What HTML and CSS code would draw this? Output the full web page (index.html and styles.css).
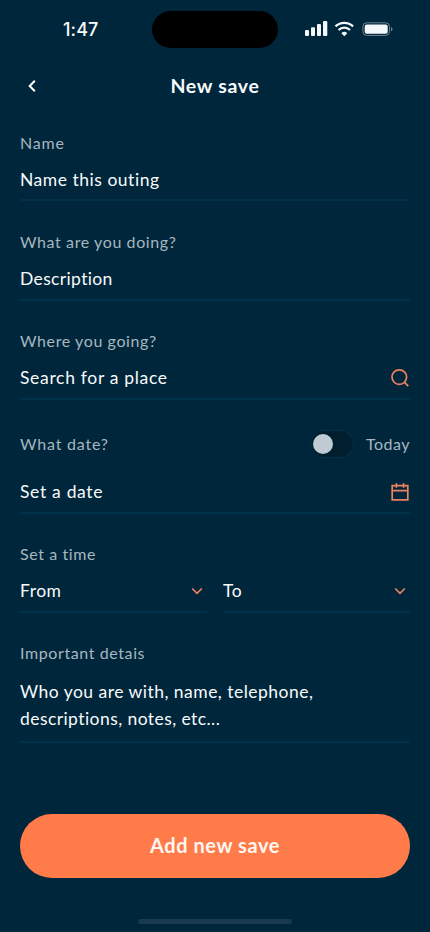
FILE: index.html
```html
<!DOCTYPE html>
<html lang="en">
<head>
<meta charset="utf-8">
<meta name="viewport" content="width=device-width, initial-scale=1">
<title>New save</title>
<link rel="stylesheet" href="styles.css">
</head>
<body>
<div class="screen">
  <div class="status">
    <span class="clock">1:47</span>
    <div class="island"></div>
    <svg class="indicators" width="90" height="18" viewBox="0 0 90 18">
      <g fill="#f4f8fa">
        <rect x="1" y="10" width="4" height="6" rx="1"/>
        <rect x="7" y="7.3" width="4" height="8.700" rx="1"/>
        <rect x="13" y="4" width="4" height="12" rx="1"/>
        <rect x="19" y="1" width="4.300" height="15" rx="1"/>
        <path d="M40.300 16.200l-3-3a4.300 4.300 0 0 1 6 0z"/>
      </g>
      <g fill="none" stroke="#f4f8fa" stroke-width="2.300">
        <path d="M31.500 6.400a12.800 12.800 0 0 1 17.600 0"/>
        <path d="M34.600 10a8.200 8.200 0 0 1 11.400 0"/>
      </g>
      <rect x="58.900" y="2.800" width="26.600" height="12.600" rx="3.800" fill="none" stroke="#6f8490"/>
      <rect x="60.700" y="4.500" width="23" height="9.200" rx="2" fill="#f4f8fa"/>
      <path d="M87 7v4.400q1.500-.7 1.500-2.200T87 7z" fill="#6f8490"/>
    </svg>
  </div>
  <header class="header">
    <svg class="back" width="24" height="24" viewBox="0 0 24 24"><path d="M14.800 6.700L9.700 12l5.100 5.300"/></svg>
    <h1 class="title">New save</h1>
  </header>
  <main class="form">
    <section class="field first">
      <div class="label name-label">Name</div>
      <div class="value"><span class="name-value">Name this outing</span></div>
    </section>
    <section class="field">
      <div class="label">What are you doing?</div>
      <div class="value"><span class="doing-value">Description</span></div>
    </section>
    <section class="field">
      <div class="label">Where you going?</div>
      <div class="value"><span class="where-value">Search for a place</span>
        <svg class="icon" width="20" height="20" viewBox="0 0 20 20"><circle cx="9.300" cy="9.100" r="7.300"/><path d="M14.500 14.300l3.800 3.800"/></svg>
      </div>
    </section>
    <section class="field date">
      <div class="label-row">
        <div class="label date-label">What date?</div>
        <div class="toggle"><div class="switch"><div class="knob"></div></div><span class="label today">Today</span></div>
      </div>
      <div class="value"><span class="date-value">Set a date</span>
        <svg class="icon" width="20" height="20" viewBox="0 0 20 20"><path d="M2.200 3.600h15.600v14.200H2.200zM2.200 8.600h15.600M6.400 1.200v4.600M13.600 1.200v4.600"/></svg>
      </div>
    </section>
    <section class="time">
      <div class="label">Set a time</div>
      <div class="selects">
        <div class="value line"><span>From</span><svg class="icon" width="20" height="20" viewBox="0 0 20 20"><path d="M5.200 7.500l4.800 4.800 4.800-4.800"/></svg></div>
        <div class="value line"><span>To</span><svg class="icon" width="20" height="20" viewBox="0 0 20 20"><path d="M5.200 7.500l4.800 4.800 4.800-4.800"/></svg></div>
      </div>
    </section>
    <section class="field details">
      <div class="label">Important detais</div>
      <div class="notes"><div>Who you are with, name, telephone,</div><div class="note-end">descriptions, notes, etc...</div></div>
    </section>
  </main>
  <button class="submit">Add new save</button>
  <div class="home"></div>
</div>
</body>
</html>
```
FILE: styles.css
```css
* { box-sizing: border-box; }
body { margin: 0; background: #00263b; font-family: Lato, "Open Sans", sans-serif; font-variant-ligatures: none; }
.screen { width: 430px; height: 932px; display: flex; flex-direction: column; overflow: hidden; color: #f7fbfc; white-space: nowrap; }
.status { height: 59px; padding-top: 11px; display: grid; grid-template-columns: 152px 126px 1fr; align-items: start; }
.clock { padding-left: 63px; line-height: 38px; font-family: Inter, sans-serif; font-size: 18px; font-weight: 500; letter-spacing: .1px; }
.island { height: 37px; border-radius: 19px; background: #000; }
.indicators { margin: 9px 0 0 26px; }
.header { height: 54px; padding: 0 20px; display: grid; grid-template-columns: 24px 1fr 24px; align-items: center; }
.back { fill: none; stroke: #fff; stroke-width: 2; }
.title { margin: 0; text-align: center; font-size: 19.5px; line-height: 24px; font-weight: 700; letter-spacing: .7px; }
.form { padding: 18px 20px 0; display: flex; flex-direction: column; gap: 28px; }
.field { height: 71px; border-bottom: 2px solid #01314a; }
.first { height: 70px; margin-bottom: 1px; }
.label { height: 24px; line-height: 24px; color: #a6b7c0; font-size: 16px; letter-spacing: .6px; }
.name-label, .date-label { letter-spacing: .8px; }
.value { height: 24px; margin-top: 13px; line-height: 24px; font-size: 17.5px; letter-spacing: .5px; display: flex; justify-content: space-between; align-items: center; }
.name-value { letter-spacing: .52px; }
.doing-value { letter-spacing: .36px; }
.where-value, .date-value { letter-spacing: .68px; }
.icon { fill: none; stroke: #ef8161; stroke-width: 1.7; }
.date { height: 86px; }
.label-row { height: 32px; display: flex; justify-content: space-between; align-items: center; }
.date .value { margin-top: 20px; }
.toggle { display: flex; align-items: center; gap: 12px; }
.today { width: 44px; letter-spacing: .5px; }
.switch { width: 44px; height: 28px; padding: 3px 2px; border: 1px solid #01334b; border-radius: 14px; background: #001e2e; }
.knob { width: 20px; height: 20px; border-radius: 50%; background: #becbd2; }
.time { height: 71px; }
.selects { display: grid; grid-template-columns: 187px 187px; gap: 16px; }
.line { height: 47px; margin-top: 0; padding-top: 5px; border-bottom: 2px solid #01314a; }
.details { height: 102px; }
.notes { margin-top: 13px; font-size: 17.5px; line-height: 27px; letter-spacing: .48px; }
.note-end { letter-spacing: .43px; }
.submit { flex-shrink: 0; margin: 71px 20px 0; padding: 0 0 2px; height: 64px; border: 0; border-radius: 32px; background: #ff7b4a; color: #fff8f2; font: 700 20px/62px Lato, sans-serif; letter-spacing: .56px; }
.home { width: 154px; height: 5px; margin: 41px auto 0; border-radius: 3px; background: #183a4e; }
```
